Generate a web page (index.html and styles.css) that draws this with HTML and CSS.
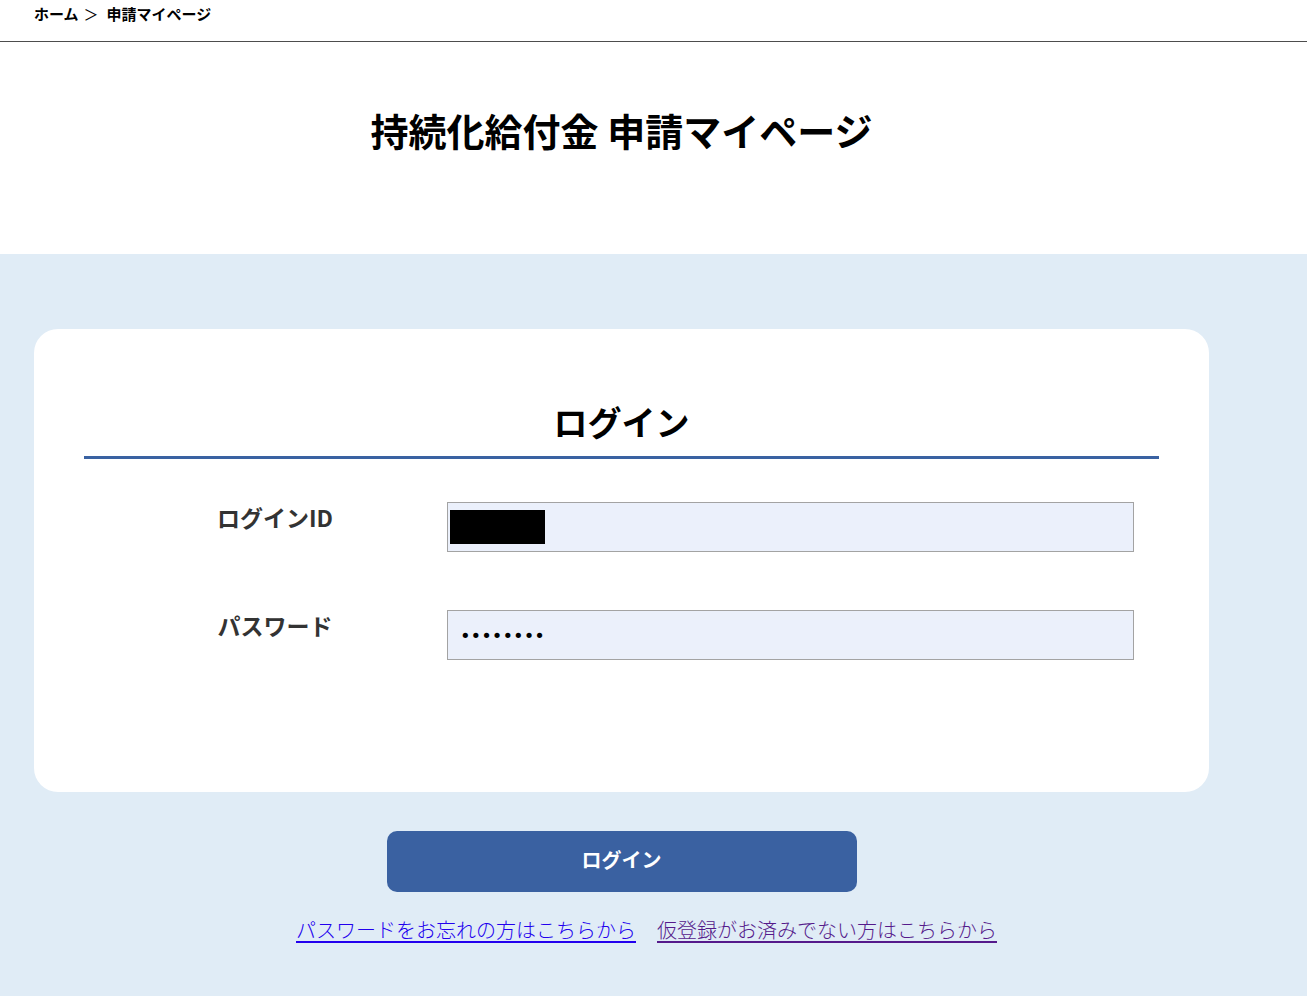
FILE: index.html
```html
<!DOCTYPE html>
<html lang="ja">
<head>
    <meta charset="UTF-8">
    <meta name="viewport" content="width=device-width, initial-scale=1.0">
    <title>持続化給付金 申請マイページ</title>
    <link rel="stylesheet" href="styles.css">
</head>
<body>

<!-- Breadcrumb -->
<div class="breadcrumb">
    <a href="#" class="crumb">ホーム</a>
    <span class="crumb-sep">＞</span>
    <span class="crumb">申請マイページ</span>
</div>

<!-- Page title -->
<div class="page-head">
    <h1 class="page-title">持続化給付金 申請マイページ</h1>
</div>

<!-- Login -->
<div class="main">
    <div class="wrap">
        <form class="login-card" id="loginForm" onsubmit="return false;">
            <h2 class="card-title">ログイン</h2>

            <div class="form-row">
                <label class="form-label" for="loginId">ログインID</label>
                <div class="form-field">
                    <input class="form-input" type="text" id="loginId" value="">
                    <span class="masked"></span>
                </div>
            </div>

            <div class="form-row">
                <label class="form-label" for="password">パスワード</label>
                <div class="form-field">
                    <input class="form-input pass" type="password" id="password" value="12345678">
                </div>
            </div>
        </form>

        <div class="actions">
            <button class="login-btn" type="submit" form="loginForm">ログイン</button>
        </div>

        <div class="links">
            <a href="#forgot" class="link">パスワードをお忘れの方はこちらから</a>
            <a href="#register" class="link visited">仮登録がお済みでない方はこちらから</a>
        </div>
    </div>
</div>

</body>
</html>
```

FILE: styles.css
```css
body {
    margin: 0;
    font-family: "Noto Sans CJK JP", "Noto Sans", sans-serif;
    color: #000;
    background-color: #e0ecf6;
}
.breadcrumb {
    background-color: #fff;
    height: 41px;
    border-bottom: 1px solid #4d4d4d;
    padding-left: 34px;
    display: flex;
    align-items: flex-start;
    font-size: 15px;
    font-weight: bold;
    line-height: 28px;
}
.crumb {
    color: #000;
    text-decoration: none;
}
.crumb-sep {
    font-weight: normal;
    margin: 0 8px 0 5px;
}
.page-head {
    background-color: #fff;
    height: 212px;
    display: flex;
    justify-content: center;
    width: 1243px;
    box-shadow: 64px 0 0 #fff;
}
.page-title {
    margin: 0;
    padding-top: 62px;
    font-size: 38px;
    line-height: 52px;
    font-weight: bold;
}
.main {
    padding: 75px 0 60px;
}
.wrap {
    width: 1175px;
    margin-left: 34px;
}
.login-card {
    background-color: #fff;
    border-radius: 24px;
    padding: 68px 50px 132px;
}
.card-title {
    margin: 0 0 43px;
    text-align: center;
    font-size: 34px;
    line-height: 50px;
    padding-bottom: 9px;
    border-bottom: 3px solid #3a62a2;
}
.form-row {
    display: flex;
    align-items: flex-start;
    padding-right: 25px;
}
.form-row + .form-row {
    margin-top: 58px;
}
.form-label {
    width: 363px;
    box-sizing: border-box;
    padding-left: 19px;
    text-align: center;
    font-size: 23px;
    font-weight: bold;
    line-height: 30px;
    color: #333;
}
.form-field {
    flex: 1;
    position: relative;
}
.form-input {
    display: block;
    width: 100%;
    box-sizing: border-box;
    height: 50px;
    margin: 0;
    padding: 0 14px;
    border: 1px solid #a3a3a3;
    background-color: #ebf0fb;
    font-family: "Liberation Sans", sans-serif;
    font-size: 16px;
    outline: none;
}
.form-input.pass {
    font-family: "DejaVu Sans", sans-serif;
    font-size: 18px;
    padding-left: 12px;
}
.masked {
    position: absolute;
    left: 3px;
    top: 8px;
    width: 95px;
    height: 34px;
    background-color: #000;
}
.actions {
    display: flex;
    justify-content: center;
    margin-top: 39px;
}
.login-btn {
    width: 470px;
    height: 61px;
    padding: 0 0 4px;
    border: none;
    border-radius: 10px;
    background-color: #3a61a1;
    color: #fff;
    font-family: "Noto Sans CJK JP", sans-serif;
    font-size: 20px;
    font-weight: bold;
    cursor: pointer;
}
.links {
    display: flex;
    justify-content: center;
    gap: 21px;
    padding-left: 50px;
    margin-top: 23px;
    font-size: 20px;
    line-height: 30px;
}
.link {
    color: #2200ee;
    text-decoration: underline;
    text-underline-offset: 3px;
    font-weight: 300;
}
.link.visited {
    color: #551a8b;
}
```
